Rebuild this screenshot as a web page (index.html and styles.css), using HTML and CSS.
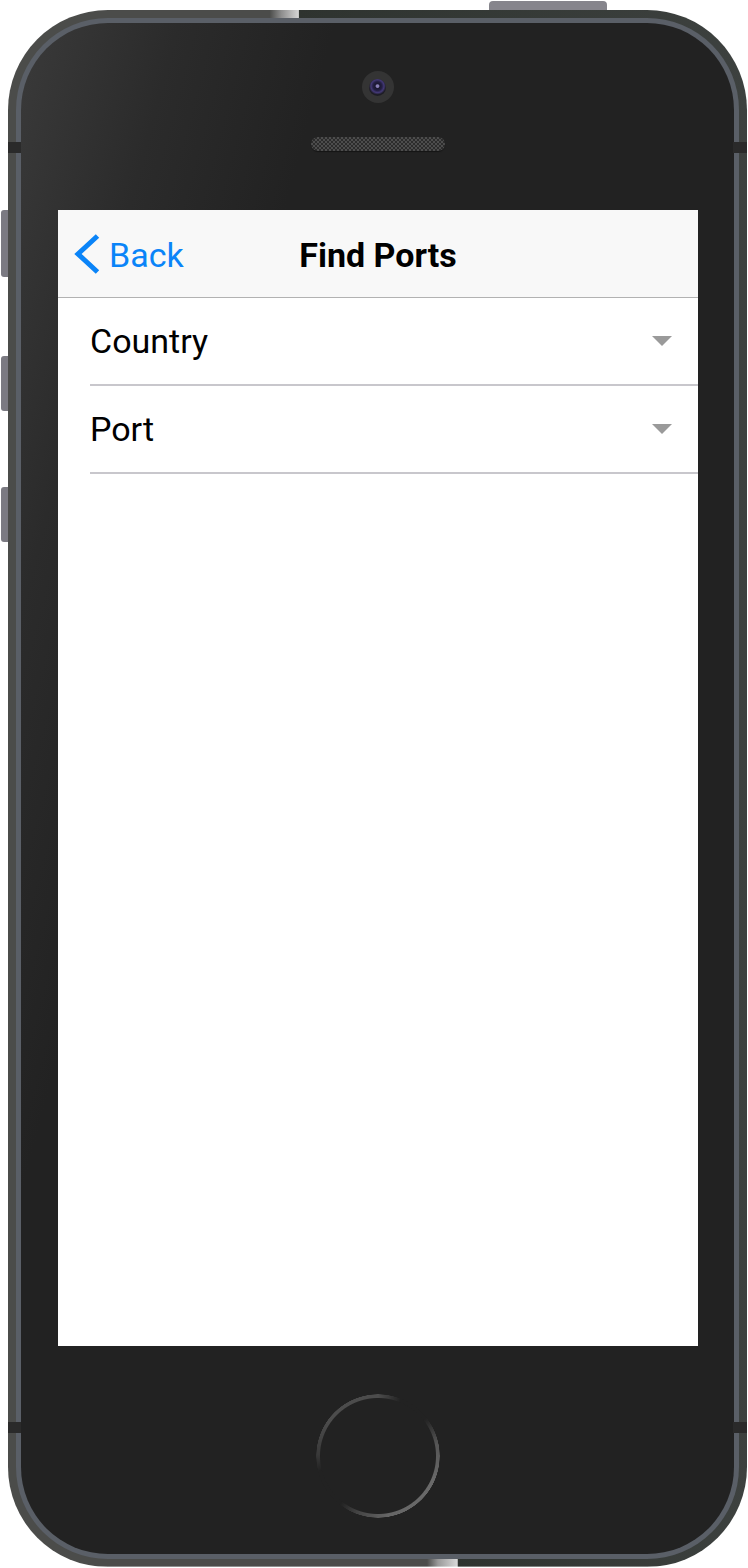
FILE: index.html
```html
<!DOCTYPE html>
<html lang="en">
<head>
<meta charset="utf-8">
<title>Find Ports</title>
<link rel="stylesheet" href="styles.css">
</head>
<body>
<div class="phone">
  <span class="btn-top"></span>
  <span class="btn-side s1"></span>
  <span class="btn-side s2"></span>
  <span class="btn-side s3"></span>
  <div class="rim">
    <div class="bezel">
      <div class="top-area">
        <div class="camera"><div class="lens"></div></div>
        <div class="speaker"></div>
      </div>
      <div class="screen">
        <header class="nav">
          <a class="back">
            <svg class="chev" viewBox="0 0 26 40" width="26" height="40"><polyline points="23.5,2 4,20 23.5,38" fill="none" stroke="#0a84f8" stroke-width="5" stroke-linejoin="miter"/></svg>
            <span>Back</span>
          </a>
          <h1 class="title">Find Ports</h1>
          <span class="nav-spacer"></span>
        </header>
        <div class="row"><span class="label">Country</span><span class="caret"></span></div>
        <div class="row"><span class="label">Port</span><span class="caret"></span></div>
      </div>
      <div class="bottom-area">
        <div class="home"></div>
      </div>
    </div>
  </div>
  <span class="bar bl1"></span>
  <span class="bar br1"></span>
  <span class="bar bl2"></span>
  <span class="bar br2"></span>
</div>
</body>
</html>
```
FILE: styles.css
```css
html, body {
  margin: 0;
  padding: 0;
  background: #ffffff;
}

.phone {
  position: relative;
  box-sizing: border-box;
  width: 739px;
  height: 1557px;
  margin: 10px 0 0 8px;
  padding: 8px;
  border-radius: 100px;
  background:
    linear-gradient(to right, #4b4c4a 0, #4b4c4a 35.4%, #8e8e8e 37%, #d4d4d4 39.3%, #2e332f 39.4%, #3d413f 100%) top / 100% 50% no-repeat,
    linear-gradient(to right, #4b4c4a 0, #4b4c4a 56.7%, #9a9a9a 58.2%, #d8d8d8 60.8%, #2e332f 60.9%, #3d413f 100%) bottom / 100% 52% no-repeat;
}

.rim {
  box-sizing: border-box;
  height: 100%;
  padding: 5px;
  border-radius: 92px;
  background: #5a5f67;
}

.bezel {
  height: 100%;
  border-radius: 87px;
  display: flex;
  flex-direction: column;
  background: linear-gradient(105deg, #3a3a3a 0%, #2b2b2b 14%, #222222 28%, #222222 100%);
}

.top-area {
  height: 187px;
  display: flex;
  flex-direction: column;
  align-items: center;
}

.camera {
  margin-top: 48px;
  width: 32px;
  height: 32px;
  border-radius: 50%;
  background: #343434;
  display: grid;
  place-items: center;
}

.lens {
  width: 17px;
  height: 17px;
  border-radius: 50%;
  background: radial-gradient(circle at 50% 42%, #8a80b8 0, #8a80b8 1.3px, #1b1830 2.4px, #241f44 4.5px, #433876 6.5px, #1d1c24 8.5px);
}

.speaker {
  margin-top: 34px;
  width: 134px;
  height: 14px;
  border-radius: 7px;
  background: repeating-conic-gradient(#4d4d4d 0 25%, #2c2c2c 0 50%) 0 0 / 4px 4px;
  box-shadow: 0 1px 1px rgba(0, 0, 0, 0.4);
}

.screen {
  width: 640px;
  height: 1136px;
  margin-left: 37px;
  background: #ffffff;
  font-family: Roboto, "Liberation Sans", Arial, sans-serif;
}

.nav {
  box-sizing: border-box;
  height: 88px;
  padding-top: 2px;
  background: #f8f8f8;
  border-bottom: 1px solid #b2b2b2;
  display: grid;
  grid-template-columns: 1fr auto 1fr;
  align-items: center;
}

.back {
  display: flex;
  align-items: center;
  gap: 9px;
  padding-left: 16px;
  color: #0a84f8;
  font-size: 34px;
  line-height: 1;
  text-decoration: none;
}

.chev {
  display: block;
  margin-top: -2px;
}

.title {
  margin: 0;
  font-size: 34px;
  font-weight: 700;
  line-height: 1;
  color: #000000;
}

.row {
  box-sizing: border-box;
  height: 88px;
  margin-left: 32px;
  padding-right: 26px;
  border-bottom: 2px solid #c8c7cc;
  display: flex;
  align-items: center;
  justify-content: space-between;
}

.label {
  font-size: 34px;
  line-height: 1;
  color: #000000;
}

.caret {
  width: 0;
  height: 0;
  border-left: 10px solid transparent;
  border-right: 10px solid transparent;
  border-top: 10px solid #9a9a9a;
}

.bottom-area {
  flex: 1;
  display: flex;
  justify-content: center;
}

.home {
  margin-top: 48px;
  width: 124px;
  height: 124px;
  border-radius: 50%;
  background: conic-gradient(#4c4c4c 0deg, #3a3a3a 10deg, #222222 22deg, #222222 52deg, #555555 78deg, #6a6a6a 115deg, #666666 170deg, #444444 200deg, #222222 218deg, #222222 256deg, #3a3a3a 272deg, #4c4c4c 305deg, #4c4c4c 360deg);
  -webkit-mask: radial-gradient(closest-side, transparent calc(100% - 4.5px), #000 calc(100% - 3.5px), #000 calc(100% - 0.5px), transparent 100%);
  mask: radial-gradient(closest-side, transparent calc(100% - 4.5px), #000 calc(100% - 3.5px), #000 calc(100% - 0.5px), transparent 100%);
}

/* hardware details overlaying the frame */
.btn-top {
  position: absolute;
  top: -9px;
  left: 481px;
  width: 118px;
  height: 9px;
  border-radius: 4px 4px 0 0;
  background: #86858c;
}

.btn-side {
  position: absolute;
  left: -7px;
  width: 7px;
  border-radius: 3px 0 0 3px;
  background: #7b7a82;
}
.s1 { top: 200px; height: 67px; }
.s2 { top: 346px; height: 55px; }
.s3 { top: 477px; height: 55px; }

.bar {
  position: absolute;
  height: 11px;
  background: #2a2a2a;
}
.bl1 { left: 0; top: 132px; width: 13px; }
.br1 { right: 0; top: 132px; width: 14px; }
.bl2 { left: 0; top: 1412px; width: 13px; }
.br2 { right: 0; top: 1412px; width: 14px; }
```
